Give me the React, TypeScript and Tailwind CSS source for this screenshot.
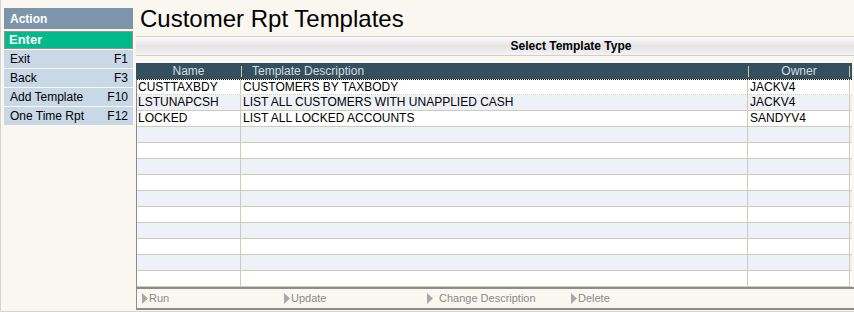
import React from "react";

const menu = [
  { label: "Exit", key: "F1" },
  { label: "Back", key: "F3" },
  { label: "Add Template", key: "F10" },
  { label: "One Time Rpt", key: "F12" },
];

const rows = [
  { name: "CUSTTAXBDY", desc: "CUSTOMERS BY TAXBODY", owner: "JACKV4" },
  { name: "LSTUNAPCSH", desc: "LIST ALL CUSTOMERS WITH UNAPPLIED CASH", owner: "JACKV4" },
  { name: "LOCKED", desc: "LIST ALL LOCKED ACCOUNTS", owner: "SANDYV4" },
];

const actions = [
  { label: "Run", w: "w-[142px]" },
  { label: "Update", w: "w-[143px]" },
  { label: "Change Description", w: "w-[144px]", gap: "gap-[6px]" },
  { label: "Delete", w: "w-[100px]" },
];

function Arrow() {
  return (
    <svg width="6" height="11" viewBox="0 0 6 11" className="shrink-0">
      <path d="M0 0 L6 5.5 L0 11 Z" fill="#a8a8a8" />
    </svg>
  );
}

export default function App() {
  const allRows = Array.from({ length: 13 }, (_, i) => rows[i] ?? null);

  return (
    <div
      className="w-[854px] h-[312px] bg-[#faf6f0] border-l border-b border-[#d4d4d4] flex overflow-hidden text-[12px] text-black"
      style={{ fontFamily: '"Liberation Sans", Arial, sans-serif' }}
    >
      {/* Action sidebar */}
      <div className="w-[129px] ml-[3px] mt-[8px] flex flex-col shrink-0">
        <div className="h-[21px] bg-[#7d95ab] text-white font-bold pl-[6px] flex items-center">
          Action
        </div>
        <div className="h-[18px] mt-[2px] bg-[#00ba8b] border border-[#9c928b] text-white font-bold text-[13px] pl-[4px] flex items-center">
          Enter
        </div>
        {menu.map((m) => (
          <div
            key={m.key}
            className="h-[18px] mt-[1px] bg-[#c8d8e6] flex items-center justify-between pl-[6px] pr-[5px]"
          >
            <span>{m.label}</span>
            <span>{m.key}</span>
          </div>
        ))}
      </div>

      {/* Main area */}
      <div className="ml-[3px] flex-1 flex flex-col">
        <div className="h-[36px] pl-[4px] pt-[5px] text-[24px] leading-[27px]">
          Customer Rpt Templates
        </div>
        <div className="h-[20px] border-y border-[#cfcfcf] bg-gradient-to-b from-[#fbfbfb] via-[#e4e4e4] to-[#f4f4f4] flex items-center justify-center pl-[152px] font-bold">
          Select Template Type
        </div>

        <div className="mt-[7px] w-[716px] flex flex-col">
          {/* header */}
          <div className="h-[16px] bg-[#34505f] text-[#d4dce2] flex items-center">
            <div className="w-[105px] text-center">Name</div>
            <div className="w-[507px] pl-[10px] flex items-center">
              <span className="w-px h-[11px] bg-[#cfc7a8] -ml-[10px] mr-[10px]" />
              Template Description
            </div>
            <div className="flex-1 flex items-center">
              <span className="w-px h-[11px] bg-[#cfc7a8]" />
              <span className="flex-1 text-center">Owner</span>
              <span className="w-px h-[11px] bg-[#cfc7a8] mr-[2px]" />
            </div>
          </div>
          {/* body */}
          <div className="border-l border-[#8c8c8c]">
            {allRows.map((r, i) => (
              <div
                key={i}
                className={`h-[16px] flex border-b border-[#cdcbba] ${
                  i % 2 === 1 ? "bg-[#eef2f8]" : "bg-white"
                } ${i === 0 ? "border-t border-t-black border-dotted" : ""}`}
              >
                <div className="w-[104px] border-r border-[#cdcbba] pl-[1px] leading-[15px]">
                  {r?.name}
                </div>
                <div className="w-[507px] border-r border-[#cdcbba] pl-[2px] leading-[15px]">
                  {r?.desc}
                </div>
                <div className="w-[102px] border-r border-[#cdcbba] pl-[2px] leading-[15px]">
                  {r?.owner}
                </div>
              </div>
            ))}
          </div>
          {/* action bar */}
          <div className="h-[23px] border-t-2 border-l border-b-2 border-[#8c8c8c] flex items-center pl-[5px] text-[11px] text-[#8a8a8a] w-[718px]">
            {actions.map((a) => (
              <div key={a.label} className={`${a.w} flex items-center ${a.gap ?? "gap-[1px]"}`}>
                <Arrow />
                <span>{a.label}</span>
              </div>
            ))}
          </div>
        </div>
      </div>
    </div>
  );
}
